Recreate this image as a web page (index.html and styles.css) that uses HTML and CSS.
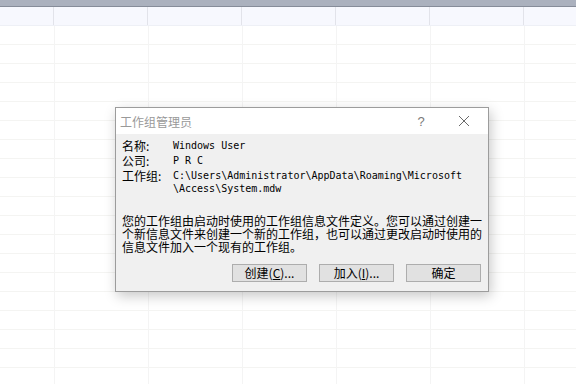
FILE: index.html
```html
<!DOCTYPE html>
<html lang="zh-CN">
<head>
    <meta charset="UTF-8">
    <title>工作组管理员</title>
    <link rel="stylesheet" href="styles.css">
</head>
<body>
    <div class="topbar"></div>
    <div class="header-row">
        <div class="hcell first"></div>
        <div class="hcell"></div>
        <div class="hcell"></div>
        <div class="hcell"></div>
        <div class="hcell"></div>
        <div class="hcell"></div>
        <div class="hcell"></div>
    </div>
    <div class="sheet"></div>

    <div class="dialog">
        <div class="titlebar">
            <span class="title">工作组管理员</span>
            <span class="help">?</span>
            <span class="close">
                <svg width="12" height="12" viewBox="0 0 12 12"><path d="M1 1 L11 11 M11 1 L1 11" stroke="#6a6a6a" stroke-width="1" fill="none"/></svg>
            </span>
        </div>
        <div class="body">
            <div class="info">
                <div class="label">名称:</div>
                <div class="value">Windows User</div>
                <div class="label">公司:</div>
                <div class="value">P R C</div>
                <div class="label">工作组:</div>
                <div class="value">C:\Users\Administrator\AppData\Roaming\Microsoft<br>\Access\System.mdw</div>
            </div>
            <p class="desc">您的工作组由启动时使用的工作组信息文件定义。您可以通过创建一<br>个新信息文件来创建一个新的工作组，也可以通过更改启动时使用的<br>信息文件加入一个现有的工作组。</p>
            <div class="buttons">
                <button class="btn">创建(<u>C</u>)...</button>
                <button class="btn">加入(<u>I</u>)...</button>
                <button class="btn">确定</button>
            </div>
        </div>
    </div>
</body>
</html>
```

FILE: styles.css
```css
body { margin: 0; width: 576px; height: 384px; overflow: hidden; background: #fff; font-family: "Noto Sans CJK SC", sans-serif; position: relative; }
.topbar { height: 6px; background: #abb1be; border-bottom: 1px solid #868c99; }
.header-row { display: flex; height: 18px; overflow: hidden; background: #f7f8fe; border-bottom: 1px solid #eef0f6; }
.hcell { width: 93px; flex: none; border-right: 1px solid #e2e3ea; }
.hcell.first { width: 53px; }
.sheet {
    height: 358px;
    background-image: linear-gradient(to right, #f4f4f4 1px, transparent 1px), linear-gradient(to bottom, #f4f4f2 1px, transparent 1px);
    background-size: 94px 100%, 100% 19px;
    background-position: 54px 0, 0 18px;
}

.dialog { position: absolute; left: 115px; top: 107px; width: 372px; height: 183px; border: 1px solid #9c9c9c; background: #f0f0f0; box-shadow: 2px 4px 12px rgba(0,0,0,0.22); display: flex; flex-direction: column; }
.titlebar { height: 26px; background: #fff; display: flex; align-items: center; font-size: 12px; color: #999; }
.title { padding-left: 4px; flex: 1; }
.help { width: 14px; text-align: center; font-family: "Liberation Sans", sans-serif; font-size: 13px; color: #7a7a7a; margin-right: 30px; }
.close { display: flex; margin-right: 18px; }

.body { padding: 5px 7px 0 6px; font-size: 12px; color: #000; }
.info { display: grid; grid-template-columns: 51px auto; row-gap: 2px; line-height: 13px; }
.value { font-family: "DejaVu Sans Mono", monospace; font-size: 10px; }
.desc { margin: 19px 0 0 0; line-height: 13px; white-space: nowrap; }
.buttons { display: flex; justify-content: flex-end; gap: 12px; margin-top: 11px; }
.btn { width: 75px; height: 18px; padding: 0; border: 1px solid #adadad; background: #e1e1e1; font-family: "Noto Sans CJK SC", sans-serif; font-size: 12px; line-height: 16px; color: #000; }
```
